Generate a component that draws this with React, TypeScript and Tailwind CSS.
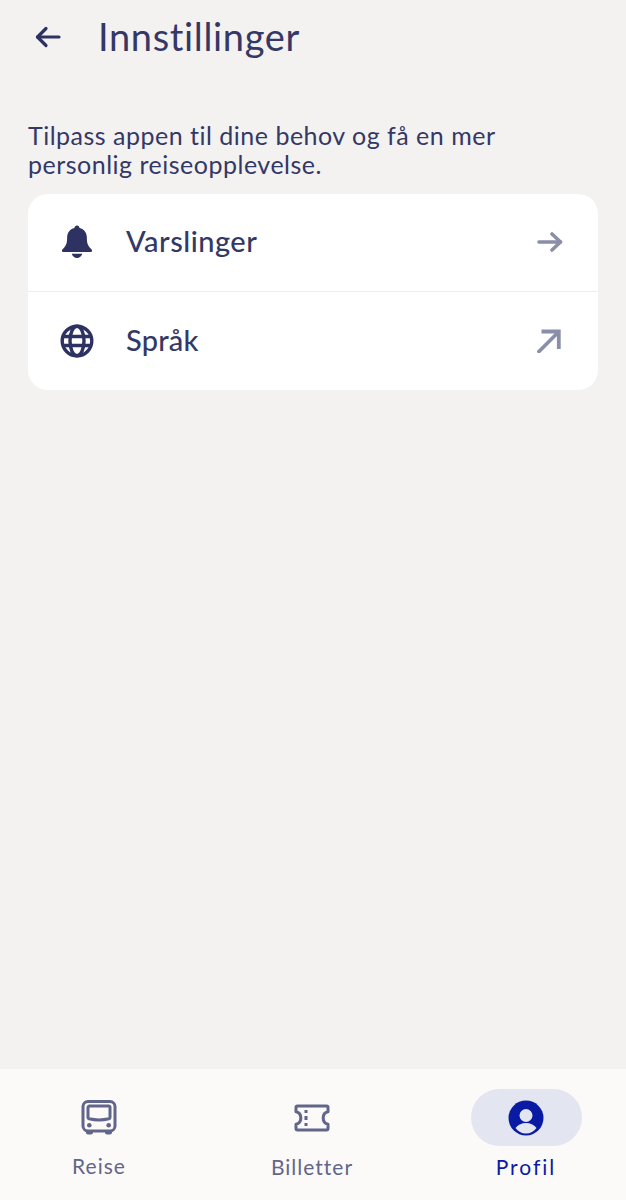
const F = "font-['Lato','Noto_Sans',sans-serif]";

function BackArrow() {
  return (
    <svg width="28" height="28" viewBox="0 0 28 28" fill="none" stroke="#2d3262" strokeWidth="3.200" strokeLinecap="round" strokeLinejoin="round">
      <path d="M3.500 14H25" />
      <path d="M12 5.500L3.500 14L12 22.500" />
    </svg>
  );
}

function Bell() {
  return (
    <svg width="32" height="34" viewBox="0 0 34 36" fill="#2d3262" className="-mt-[2px]">
      <path d="M17 0.500c1.500 0 2.600 1.100 2.700 2.600 5 1.200 7.800 5.200 7.800 10.400 0 4.500.5 8 4 11.300.9.900 1.500 1.600 1.500 2.400 0 .9-.7 1.300-1.700 1.300H2.700C1.700 28.500 1 28.100 1 27.200c0-.8.6-1.500 1.500-2.400 3.500-3.300 4-6.800 4-11.300 0-5.200 2.800-9.200 7.800-10.400C14.400 1.600 15.500.5 17 .5z" />
      <path d="M11.500 30.500h11c-.4 2.500-2.800 4.500-5.500 4.500s-5.100-2-5.500-4.500z" />
    </svg>
  );
}

function Globe() {
  return (
    <svg width="34" height="34" viewBox="0 0 34 34" fill="none" stroke="#2d3262" strokeWidth="3.400">
      <circle cx="17" cy="17" r="14.800" />
      <ellipse cx="17" cy="17" rx="7" ry="14.800" />
      <path d="M3 12.500h28M3 21.500h28" />
    </svg>
  );
}

function RightArrow() {
  return (
    <svg width="26" height="22" viewBox="0 0 26 22" fill="none" stroke="#8b8ea8" strokeWidth="3.600" strokeLinecap="round" strokeLinejoin="round" className="-mt-[2px]">
      <path d="M2 11H23.500" />
      <path d="M15 3L23.500 11L15 19" />
    </svg>
  );
}

function DiagArrow() {
  return (
    <svg width="24" height="24" viewBox="0 0 24 24" fill="none" stroke="#8b8ea8" strokeWidth="3.800" strokeLinecap="round">
      <path d="M2 22.500L21 3.500" />
      <path d="M4.500 2.500H21.800V20" strokeLinecap="butt" />
    </svg>
  );
}

function Bus() {
  return (
    <svg width="36" height="36" viewBox="0 0 36 36" fill="none" stroke="#62658a" strokeWidth="3">
      <rect x="2" y="1.500" width="32" height="29.500" rx="5" />
      <path d="M7 7.500c0-.8.6-1.400 1.400-1.400h19.200c.8 0 1.400.6 1.400 1.400v10c0 .7-.4 1.100-1.100 1.300-3.300.8-6.200 1.200-9.900 1.200s-6.600-.4-9.900-1.200C7.400 18.600 7 18.200 7 17.500V7.500z" />
      <circle cx="8.300" cy="25.300" r="2.300" fill="#62658a" stroke="none" />
      <circle cx="27.700" cy="25.300" r="2.300" fill="#62658a" stroke="none" />
      <path d="M5 31h7v1.500c0 1-.8 2-2 2H7c-1.200 0-2-1-2-2V31zM24 31h7v1.500c0 1-.8 2-2 2h-3c-1.200 0-2-1-2-2V31z" fill="#62658a" stroke="none" />
    </svg>
  );
}

function Ticket() {
  return (
    <svg width="36" height="28" viewBox="0 0 36 28" fill="none" stroke="#62658a" strokeWidth="3" strokeLinejoin="round">
      <path d="M3.500 2h29c.9 0 1.500.6 1.500 1.500v4.300c-3 .6-4.800 3.200-4.800 6.200s1.800 5.600 4.800 6.200v4.300c0 .9-.6 1.500-1.500 1.500h-29c-.9 0-1.500-.6-1.500-1.500v-4.300c3-.6 4.800-3.200 4.800-6.200S5 8.400 2 7.800V3.500C2 2.600 2.600 2 3.500 2z" />
      <path d="M12 6v3M12 12v4M12 19v3" strokeLinecap="butt" />
    </svg>
  );
}

function Person() {
  return (
    <svg width="36" height="36" viewBox="0 0 36 36">
      <circle cx="18" cy="18" r="17.500" fill="#0a1ba3" />
      <circle cx="18" cy="15.500" r="6.500" fill="#e3e5f1" />
      <path d="M7.500 28c2-3 6-5 10.500-5s8.500 2 10.500 5c-2.500 3.500-6 5.500-10.500 5.500S10 31.500 7.500 28z" fill="#e3e5f1" />
    </svg>
  );
}

export default function App() {
  return (
    <div className={`${F} w-[626px] h-[1200px] flex flex-col bg-[#f3f2f0] text-[#343866]`}>
      <header className="h-[74px] flex items-center pl-[34px] gap-[36px]">
        <BackArrow />
        <h1 className="text-[38px] leading-[48px] tracking-[0.65px] -mt-[2px]">Innstillinger</h1>
      </header>
      <main className="flex-1 px-[28px] pt-[47px]">
        <p className="text-[25px] leading-[29px] tracking-[0.5px]">
          Tilpass appen til dine behov og få en mer
          <br />
          personlig reiseopplevelse.
        </p>
        <div className="mt-[15px] bg-white rounded-[20px]">
          <div className="h-[98px] flex items-center pl-[32px] pr-[35px] border-b border-[#efeeee]">
            <div className="w-[34px] flex justify-center"><Bell /></div>
            <span className="ml-[32px] flex-1 text-[29px] font-medium tracking-[0.5px] -mt-[4px]">Varslinger</span>
            <RightArrow />
          </div>
          <div className="h-[98px] flex items-center pl-[32px] pr-[37px]">
            <div className="w-[34px] flex justify-center"><Globe /></div>
            <span className="ml-[32px] flex-1 text-[29px] font-medium tracking-[0.2px] -mt-[2px]">Språk</span>
            <DiagArrow />
          </div>
        </div>
      </main>
      <nav className="h-[131px] bg-[#fbfaf8] grid grid-cols-[198px_228px_200px] pt-[20px]">
        <div className="flex flex-col items-center text-[#62658a]">
          <div className="h-[57px] flex items-center justify-center"><Bus /></div>
          <span className="text-[21px] leading-[26px] mt-[7px] tracking-[1px]">Reise</span>
        </div>
        <div className="flex flex-col items-center text-[#62658a]">
          <div className="h-[57px] flex items-center justify-center"><Ticket /></div>
          <span className="text-[21px] leading-[26px] mt-[8px] tracking-[1px]">Billetter</span>
        </div>
        <div className="flex flex-col items-center text-[#0a1ba3]">
          <div className="w-[111px] h-[57px] rounded-full bg-[#e3e5f1] flex items-center justify-center"><Person /></div>
          <span className="text-[21px] leading-[26px] mt-[8px] tracking-[2px]">Profil</span>
        </div>
      </nav>
    </div>
  );
}
